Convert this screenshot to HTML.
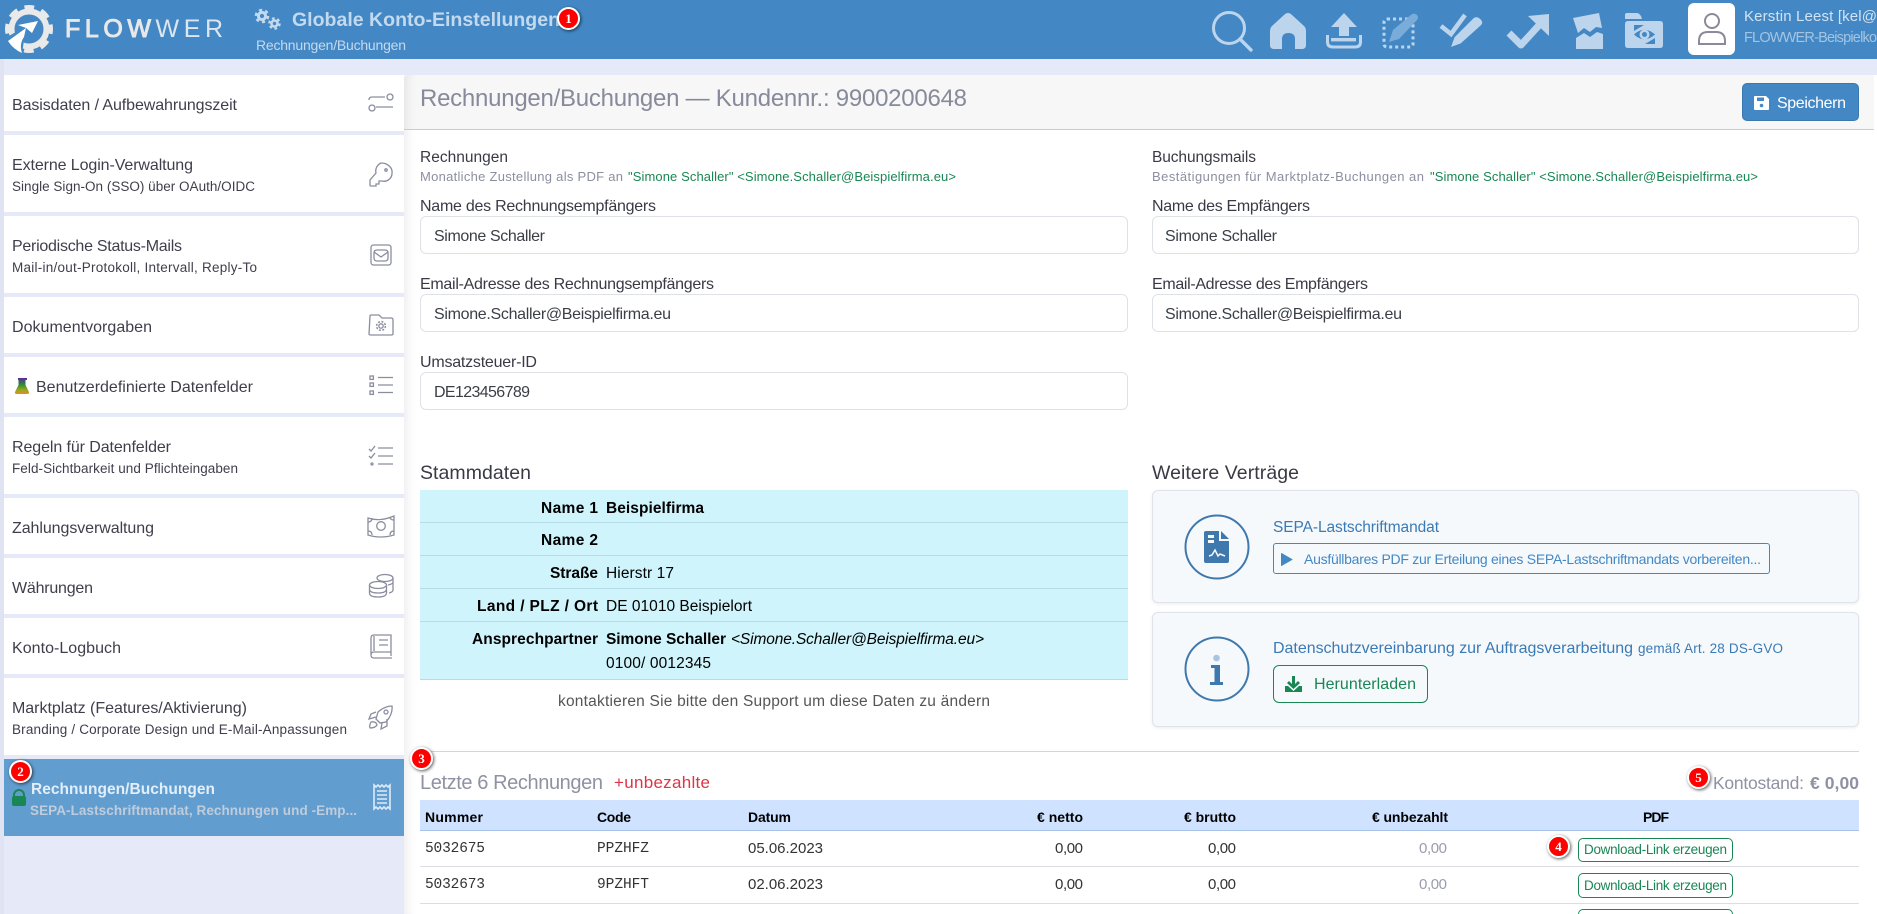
<!DOCTYPE html>
<html lang="de"><head><meta charset="utf-8"><title>FLOWWER – Globale Konto-Einstellungen</title>
<style>
html,body{margin:0;padding:0;width:1877px;height:914px;overflow:hidden;background:#e6eaf8;font-family:"Liberation Sans",Arial,sans-serif}
#p{position:relative;width:1877px;height:914px;overflow:hidden}
.b{position:absolute;box-sizing:border-box}
.t{position:absolute;white-space:nowrap;line-height:20px;height:20px;font-size:15px;color:#3a3a46;z-index:4}
.s{font-size:16px;color:#3f3f4c}
.u{font-size:13.5px;color:#3f3f4c}
.l{font-size:16px;color:#3a3a46}
.d{font-size:16px;color:#3a3f47}
.g{color:#198754}
.h{font-size:14px;font-weight:bold;color:#000}
.k{font-size:15.5px;color:#000}
.kb{font-size:15.5px;font-weight:bold;color:#000}
.m{font-family:"Liberation Mono",monospace;font-size:14.5px;color:#333}
.n{font-size:15px;color:#333}
.inp{background:#fff;border:1px solid #dee2e6;border-radius:6px;height:38px}
.card{background:#f6f9fc;border:1px solid #dfe3ea;border-radius:6px;box-shadow:0 1px 3px rgba(0,0,0,.08)}
.item{left:4px;width:400px;background:#fff}
.dl{left:1578px;width:155px;border:1px solid #198754;border-radius:5px;background:#fff}
.bd{position:absolute;width:23px;height:23px;box-sizing:border-box;border:2px solid #fff;border-radius:50%;background:#f00;color:#fff;font:bold 13px/19px "Liberation Serif",serif;text-align:center;box-shadow:1px 1px 3px rgba(0,0,0,.65);z-index:5}
.tr{left:420px;width:708px;height:1px;background:#b5dde8}
.rl{left:420px;width:1439px;height:1px;background:#dadce6}
svg.o{position:absolute;left:0;top:0;z-index:3;pointer-events:none}
</style></head><body><div id="p">

<div class="b" style="left:0;top:0;width:1877px;height:59px;background:#4388c5"></div>
<div class="b" style="left:0;top:59px;width:4px;height:855px;background:#dfe3f2"></div>

<div class="b item" style="top:75px;height:56px"></div>
<div class="b item" style="top:135px;height:77px"></div>
<div class="b item" style="top:216px;height:77px"></div>
<div class="b item" style="top:297px;height:56px"></div>
<div class="b item" style="top:357px;height:56px"></div>
<div class="b item" style="top:417px;height:77px"></div>
<div class="b item" style="top:498px;height:56px"></div>
<div class="b item" style="top:558px;height:56px"></div>
<div class="b item" style="top:618px;height:56px"></div>
<div class="b item" style="top:678px;height:77px"></div>
<div class="b item" style="top:759px;height:77px;background:#629dcf"></div>

<div class="b" style="left:404px;top:75px;width:1470px;height:839px;background:#fff;box-shadow:inset 12px 0 10px -9px rgba(40,40,80,.09)"></div>
<div class="b" style="left:1874px;top:75px;width:3px;height:839px;background:#fff"></div>
<div class="b" style="left:404px;top:75px;width:1470px;height:55px;background:#f7f7f7;border-bottom:1px solid #ccc;border-top-left-radius:4px;box-shadow:inset 12px 0 10px -9px rgba(40,40,80,.09)"></div>

<!-- header text -->
<div class="t" style="left:65px;top:19px;font-size:25px;color:#e8e8e8;--w:158"><span style="-webkit-text-stroke:1px #e8e8e8">FLOW</span><span style="color:#dbe6f0">WER</span></div>
<div class="t" style="left:292px;top:10px;font-size:19.5px;font-weight:bold;color:#c3d9ee;--w:268">Globale Konto-Einstellungen</div>
<div class="t" style="left:256px;top:35px;font-size:14px;color:#c3d9ee;--w:150">Rechnungen/Buchungen</div>
<div class="t" style="left:1744px;top:7px;font-size:15px;color:#d2e2f1;--w:133">Kerstin Leest [kel@</div>
<div class="t" style="left:1744px;top:28px;font-size:14.5px;color:#a3c4e2;--w:133">FLOWWER-Beispielko</div>

<div class="b" style="left:1688px;top:3px;width:47px;height:52px;background:#fff;border-radius:6px"></div>

<!-- sidebar text -->
<div class="t s" style="left:12px;top:96px;--w:225">Basisdaten / Aufbewahrungszeit</div>
<div class="t s" style="left:12px;top:156px;--w:181">Externe Login-Verwaltung</div>
<div class="t u" style="left:12px;top:177px;--w:243">Single Sign-On (SSO) über OAuth/OIDC</div>
<div class="t s" style="left:12px;top:237px;--w:170">Periodische Status-Mails</div>
<div class="t u" style="left:12px;top:258px;--w:245">Mail-in/out-Protokoll, Intervall, Reply-To</div>
<div class="t s" style="left:12px;top:318px;--w:140">Dokumentvorgaben</div>
<div class="t s" style="left:36px;top:378px;--w:217">Benutzerdefinierte Datenfelder</div>
<div class="t s" style="left:12px;top:438px;--w:159">Regeln für Datenfelder</div>
<div class="t u" style="left:12px;top:459px;--w:226">Feld-Sichtbarkeit und Pflichteingaben</div>
<div class="t s" style="left:12px;top:519px;--w:142">Zahlungsverwaltung</div>
<div class="t s" style="left:12px;top:579px;--w:81">Währungen</div>
<div class="t s" style="left:12px;top:639px;--w:109">Konto-Logbuch</div>
<div class="t s" style="left:12px;top:699px;--w:235">Marktplatz (Features/Aktivierung)</div>
<div class="t u" style="left:12px;top:720px;--w:335">Branding / Corporate Design und E-Mail-Anpassungen</div>
<div class="t" style="left:31px;top:780px;font-size:15.5px;font-weight:bold;color:#e2effb;--w:184">Rechnungen/Buchungen</div>
<div class="t" style="left:30px;top:801px;font-size:13.5px;font-weight:bold;color:#bfccdb;--w:327">SEPA-Lastschriftmandat, Rechnungen und -Emp...</div>

<!-- main head -->
<div class="t" style="left:420px;top:87px;font-size:24px;height:24px;line-height:24px;color:#868a9a;--w:547">Rechnungen/Buchungen — Kundennr.: 9900200648</div>
<div class="b" style="left:1742px;top:83px;width:117px;height:38px;background:#4388c5;border:1px solid #3a78b0;border-radius:5px"></div>
<div class="t" style="left:1777px;top:94px;font-size:16px;color:#fff;--w:69">Speichern</div>

<!-- forms left -->
<div class="t l" style="left:420px;top:148px;font-size:15.5px;--w:88">Rechnungen</div>
<div class="t" style="left:420px;top:167px;font-size:13px;color:#8b8fa0;--w:203">Monatliche Zustellung als PDF an</div>
<div class="t g" style="left:628px;top:167px;font-size:13px;--w:328">"Simone Schaller" &lt;Simone.Schaller@Beispielfirma.eu&gt;</div>
<div class="t l" style="left:420px;top:197px;--w:236">Name des Rechnungsempfängers</div>
<div class="b inp" style="left:420px;top:216px;width:708px"></div>
<div class="t d" style="left:434px;top:227px;--w:111">Simone Schaller</div>
<div class="t l" style="left:420px;top:275px;--w:294">Email-Adresse des Rechnungsempfängers</div>
<div class="b inp" style="left:420px;top:294px;width:708px"></div>
<div class="t d" style="left:434px;top:305px;--w:237">Simone.Schaller@Beispielfirma.eu</div>
<div class="t l" style="left:420px;top:353px;--w:117">Umsatzsteuer-ID</div>
<div class="b inp" style="left:420px;top:372px;width:708px"></div>
<div class="t d" style="left:434px;top:383px;--w:96">DE123456789</div>

<!-- forms right -->
<div class="t l" style="left:1152px;top:148px;font-size:15.5px;--w:104">Buchungsmails</div>
<div class="t" style="left:1152px;top:167px;font-size:13px;color:#8b8fa0;--w:272">Bestätigungen für Marktplatz-Buchungen an</div>
<div class="t g" style="left:1430px;top:167px;font-size:13px;--w:328">"Simone Schaller" &lt;Simone.Schaller@Beispielfirma.eu&gt;</div>
<div class="t l" style="left:1152px;top:197px;--w:158">Name des Empfängers</div>
<div class="b inp" style="left:1152px;top:216px;width:707px"></div>
<div class="t d" style="left:1165px;top:227px;--w:112">Simone Schaller</div>
<div class="t l" style="left:1152px;top:275px;--w:216">Email-Adresse des Empfängers</div>
<div class="b inp" style="left:1152px;top:294px;width:707px"></div>
<div class="t d" style="left:1165px;top:305px;--w:237">Simone.Schaller@Beispielfirma.eu</div>

<!-- Stammdaten -->
<div class="t" style="left:420px;top:463px;font-size:19.5px;color:#3a3a46;--w:111">Stammdaten</div>
<div class="b" style="left:420px;top:490px;width:708px;height:189px;background:#cff4fc"></div>
<div class="b tr" style="top:522px"></div><div class="b tr" style="top:555px"></div><div class="b tr" style="top:588px"></div><div class="b tr" style="top:621px"></div><div class="b tr" style="top:679px"></div>
<div class="t kb" style="left:541px;top:499px;--w:57">Name 1</div>
<div class="t kb" style="left:606px;top:499px;--w:98">Beispielfirma</div>
<div class="t kb" style="left:541px;top:531px;--w:57">Name 2</div>
<div class="t kb" style="left:550px;top:564px;--w:48">Straße</div>
<div class="t k" style="left:606px;top:564px;--w:68">Hierstr 17</div>
<div class="t kb" style="left:477px;top:597px;--w:121">Land / PLZ / Ort</div>
<div class="t k" style="left:606px;top:597px;--w:146">DE 01010 Beispielort</div>
<div class="t kb" style="left:472px;top:630px;--w:126">Ansprechpartner</div>
<div class="t kb" style="left:606px;top:630px;--w:120">Simone Schaller</div>
<div class="t k" style="left:731px;top:630px;font-style:italic;--w:253">&lt;Simone.Schaller@Beispielfirma.eu&gt;</div>
<div class="t k" style="left:606px;top:654px;--w:105">0100/ 0012345</div>
<div class="t" style="left:558px;top:692px;font-size:15.5px;color:#555;--w:432">kontaktieren Sie bitte den Support um diese Daten zu ändern</div>

<!-- Verträge -->
<div class="t" style="left:1152px;top:463px;font-size:19.5px;color:#3a3a46;--w:147">Weitere Verträge</div>
<div class="b card" style="left:1152px;top:490px;width:707px;height:113px"></div>
<div class="b card" style="left:1152px;top:612px;width:707px;height:115px"></div>
<div class="t" style="left:1273px;top:518px;font-size:15.5px;color:#3a7ab5;--w:166">SEPA-Lastschriftmandat</div>
<div class="b" style="left:1273px;top:543px;width:497px;height:31px;border:1px solid #4388c5;border-radius:3px"></div>
<div class="t" style="left:1304px;top:549px;font-size:14px;color:#4388c5;--w:457">Ausfüllbares PDF zur Erteilung eines SEPA-Lastschriftmandats vorbereiten...</div>
<div class="t" style="left:1273px;top:639px;font-size:16px;color:#3a7ab5;--w:360">Datenschutzvereinbarung zur Auftragsverarbeitung</div>
<div class="t" style="left:1638px;top:639px;font-size:13.5px;color:#3a7ab5;--w:145">gemäß Art. 28 DS-GVO</div>
<div class="b" style="left:1273px;top:665px;width:155px;height:38px;border:1px solid #198754;border-radius:6px"></div>
<div class="t g" style="left:1314px;top:675px;font-size:16px;--w:102">Herunterladen</div>

<!-- invoices -->
<div class="b" style="left:420px;top:751px;width:1439px;height:1px;background:#d4d5dc"></div>
<div class="t" style="left:420px;top:773px;font-size:20px;color:#8e92a2;--w:183">Letzte 6 Rechnungen</div>
<div class="t" style="left:614px;top:773px;font-size:17px;color:#dc3545;--w:96">+unbezahlte</div>
<div class="t" style="left:1713px;top:773px;font-size:17.5px;color:#8e92a2;--w:91">Kontostand:</div>
<div class="t" style="left:1810px;top:773px;font-size:17.5px;font-weight:bold;color:#8e92a2;--w:49">€ 0,00</div>

<div class="b" style="left:420px;top:800px;width:1439px;height:31px;background:#cfe2ff;border-bottom:1px solid #a9c4ea"></div>
<div class="t h" style="left:425px;top:807px;--w:58">Nummer</div>
<div class="t h" style="left:597px;top:807px;--w:34">Code</div>
<div class="t h" style="left:748px;top:807px;--w:43">Datum</div>
<div class="t h" style="left:1037px;top:807px;--w:46">€ netto</div>
<div class="t h" style="left:1184px;top:807px;--w:52">€ brutto</div>
<div class="t h" style="left:1372px;top:807px;--w:76">€ unbezahlt</div>
<div class="t h" style="left:1643px;top:807px;--w:26">PDF</div>

<div class="b rl" style="top:866px"></div><div class="b rl" style="top:903px"></div>
<div class="t m" style="left:425px;top:839px;--w:60">5032675</div>
<div class="t m" style="left:597px;top:839px;--w:52">PPZHFZ</div>
<div class="t n" style="left:748px;top:839px;--w:75">05.06.2023</div>
<div class="t n" style="left:1055px;top:839px;--w:28">0,00</div>
<div class="t n" style="left:1208px;top:839px;--w:28">0,00</div>
<div class="t n" style="left:1419px;top:839px;color:#9a9dac;--w:28">0,00</div>
<div class="b dl" style="top:838px;height:24px"></div>
<div class="t g" style="left:1584px;top:840px;font-size:13.5px;--w:143">Download-Link erzeugen</div>

<div class="t m" style="left:425px;top:875px;--w:60">5032673</div>
<div class="t m" style="left:597px;top:875px;--w:52">9PZHFT</div>
<div class="t n" style="left:748px;top:875px;--w:75">02.06.2023</div>
<div class="t n" style="left:1055px;top:875px;--w:28">0,00</div>
<div class="t n" style="left:1208px;top:875px;--w:28">0,00</div>
<div class="t n" style="left:1419px;top:875px;color:#9a9dac;--w:28">0,00</div>
<div class="b dl" style="top:873px;height:25px"></div>
<div class="t g" style="left:1584px;top:876px;font-size:13.5px;--w:143">Download-Link erzeugen</div>
<div class="b dl" style="top:909px;height:5px;border-bottom:0;border-bottom-left-radius:0;border-bottom-right-radius:0"></div>

<!-- badges -->
<div class="bd" style="left:557px;top:7px">1</div>
<div class="bd" style="left:9px;top:760px">2</div>
<div class="bd" style="left:410px;top:747px">3</div>
<div class="bd" style="left:1547px;top:835px">4</div>
<div class="bd" style="left:1687px;top:766px">5</div>

<!-- all icons in page coordinates -->
<svg class="o" width="1877" height="914" viewBox="0 0 1877 914" xmlns="http://www.w3.org/2000/svg">
<defs><linearGradient id="fl" x1="0" y1="0" x2="0" y2="1"><stop offset="0" stop-color="#5a2a9a"/><stop offset=".4" stop-color="#2c8a3a"/><stop offset=".75" stop-color="#9aa820"/><stop offset="1" stop-color="#e88a20"/></linearGradient></defs>

<!-- logo -->
<g fill="none" stroke="#e9e9e9">
<circle cx="29" cy="29" r="17.5" stroke-width="6"/>
<circle cx="29" cy="29" r="21.5" stroke-width="5" stroke-dasharray="9.5 7.4" stroke-dashoffset="4.7"/>
</g>
<path d="M9 36 L26 26 L22 54 L4 44Z" fill="#4388c5"/>
<path d="M18 25 L38 21 L32 33 L26 28 Z" fill="#fff"/>
<path d="M26 28 L8 41 Q13 49 22 53 Q19 44 24 37 Z" fill="#fff"/>

<!-- title gears -->
<g fill="none" stroke="#c3d9ee">
<circle cx="262" cy="16" r="3.6" stroke-width="3"/><circle cx="262" cy="16" r="5.8" stroke-width="3" stroke-dasharray="3 3.07"/>
<circle cx="274.5" cy="23.5" r="3" stroke-width="2.6"/><circle cx="274.5" cy="23.5" r="5" stroke-width="2.6" stroke-dasharray="2.6 2.64"/>
</g>

<!-- top icons -->
<g fill="#bcd5ec">
<circle cx="1229" cy="28" r="15.5" fill="none" stroke="#bcd5ec" stroke-width="3"/>
<path d="M1240 39 L1251 50" fill="none" stroke="#bcd5ec" stroke-width="3.4" stroke-linecap="round"/>
<path d="M1288 13 Q1290 13 1292 15 L1304 26 Q1306 28 1306 31 V45 Q1306 49 1302 49 H1295 V39 Q1295 33 1288.5 33 Q1282 33 1282 39 V49 H1274 Q1270 49 1270 45 V31 Q1270 28 1272 26 L1284 15 Q1286 13 1288 13Z"/>
<path d="M1344 13 L1357 27 H1349 V36 H1339 V27 H1331Z"/>
<path d="M1327.5 35 V42 Q1327.5 47 1333 47 H1355 Q1360.5 47 1360.5 42 V35" fill="none" stroke="#bcd5ec" stroke-width="3"/>
<rect x="1331" y="38" width="25" height="3.4"/>
<rect x="1384" y="19" width="29" height="28" rx="3" fill="none" stroke="#bcd5ec" stroke-width="3" stroke-dasharray="3 3"/>
<path d="M1389 42 L1393 30 L1412 14 Q1415 13 1417 15 Q1419 17 1417 20 L1399 39Z" fill="#7aacd9"/>
<path d="M1441 26 L1451 34 L1465 15" fill="none" stroke="#bcd5ec" stroke-width="4.5"/>
<path d="M1450 48 L1454 37 L1473 18 Q1476 15 1480 18 Q1485 22 1481 26 L1461 44Z" stroke="#4388c5" stroke-width="1.2"/>
<path d="M1509 33 L1521 45 L1542 22" fill="none" stroke="#bcd5ec" stroke-width="7" stroke-linejoin="round"/>
<path d="M1528 16 L1549 14 L1549 36Z"/>
<path d="M1573 18 L1599 13 L1602 28 L1596 27 L1590 32 L1584 28 L1578 33Z"/>
<path d="M1576 38 L1584 33 L1590 37 L1597 32 L1603 34 V49 H1576Z"/>
<path d="M1625 15 Q1625 13 1627 13 H1637 Q1639 13 1641 16 L1642 19 H1625Z"/>
<path d="M1628 21 H1660 Q1663 21 1663 24 V45 Q1663 48 1660 48 H1628 Q1625 48 1625 45 V24 Q1625 21 1628 21Z"/>
</g>
<path d="M1634 34.5 Q1644 25 1655 34.5 Q1644 44 1634 34.5Z" fill="#4388c5"/><circle cx="1644.5" cy="34.5" r="5" fill="#bcd5ec"/><circle cx="1644.5" cy="34.5" r="2.5" fill="#4388c5"/>
<path d="M1634 25 L1644 25 L1634 31Z M1655 44 L1645 44 L1655 38Z" fill="#4388c5"/>

<!-- user -->
<g fill="none" stroke="#8a8a9a" stroke-width="2"><circle cx="1712" cy="21" r="7"/><path d="M1699 44 V41 Q1699 32 1708 32 H1716 Q1725 32 1725 41 V44Z"/></g>

<!-- sidebar icons -->
<g fill="none" stroke="#8a8d9e" stroke-width="1.3">
<path d="M369 100 Q369 97 372 97 H385"/><circle cx="390" cy="97" r="3"/><circle cx="372" cy="108" r="3"/><path d="M376 107 H393 "/>
<path d="M381 163 a11 9 0 0 1 11 10 a8 8 0 0 1-10 8 l-3 0 v3 h-3 v2 h-5 q-1 0-1-1 v-5 l6-7 a10 9 0 0 1 5-10z"/><circle cx="386" cy="170" r="1.2"/>
<rect x="371" y="245" width="20" height="20" rx="2.5"/><path d="M374 253 Q374 250 377 250 H385 Q388 250 388 253 V258 Q388 261 385 261 H377 Q374 261 374 258Z"/><path d="M374 252 L381 257 L388 252"/>
<path d="M370 316 Q370 315 371 315 H379 L382 318 H391 Q393 318 393 320 V334 Q393 335 391 335 H371 Q369 335 369 334Z"/><circle cx="381" cy="326" r="2.2"/><circle cx="381" cy="326" r="4.4" stroke-width="1.5" stroke-dasharray="2 1.5"/>
<rect x="370" y="376" width="3.4" height="3.4"/><rect x="370" y="383" width="3.4" height="3.4"/><rect x="370" y="391" width="3.4" height="3.4"/><path d="M378 377.5 H393 M378 385 H393 M378 392.5 H393"/>
<path d="M369 449 L371 451 L375 446 M369 456 L371 458 L375 453 M378 448 H393 M378 456 H393 M378 464 H393"/><circle cx="372" cy="464" r="1"/>
<path d="M368 518 Q380 522 394 516 V535 Q380 539 368 535Z"/><circle cx="381" cy="526" r="4.3"/><path d="M368 522 Q372 522 372 518 M394 520 Q390 520 390 517 M368 531 Q372 531 372 535 M394 531 Q390 531 390 535"/>
<ellipse cx="385" cy="578" rx="8" ry="3.5"/><path d="M393 578 V590 Q393 592 389 593 M388 585 Q393 584 393 582"/><ellipse cx="378" cy="585" rx="8.5" ry="3.5"/><path d="M369.5 585 V593 Q369.5 597 378 597 Q386.5 597 386.5 593 V585 M369.5 589 Q369.5 593 378 593 Q386.5 593 386.5 589"/>
<path d="M374 635 H391 V652 H374 Q371 652 371 655 V638 Q371 635 374 635Z M371 655 Q371 658 374 658 H392 M391 652 V656 M374 636 V651 M379 640 H388 M379 645 H388"/>
<path d="M392 706 Q393 714 386 722 L380 723 L376 719 L378 712 Q385 706 392 706Z"/><circle cx="386" cy="712" r="2"/><path d="M376 712 L371 714 L369 719 L376 717 M382 723 L381 729 L387 726 L387 719"/><path d="M371 722 Q369 726 370 728 Q375 728 377 725 Q376 721 371 722Z"/>
</g>
<path d="M18 378 H27 V380 H25.5 V385 L29 392 Q29.5 394 27 394 H17 Q14.5 394 15 392 L18.5 385 V380 H18Z" fill="url(#fl)"/>
<path d="M14 800 V796 A5 5 0 0 1 24 796 V800" transform="translate(0,-1)" fill="none" stroke="#198754" stroke-width="2"/>
<rect x="12" y="796" width="14" height="10" rx="2" fill="#198754"/>
<path d="M374 785 L376 787 L378 785 L380 787 L382 785 L384 787 L386 785 L388 787 L390 785 V809 L388 807 L386 809 L384 807 L382 809 L380 807 L378 809 L376 807 L374 809Z" fill="none" stroke="#dcebf9" stroke-width="1.6"/>
<path d="M377 791 H387 M377 795 H387 M377 799 H387 M377 803 H387" stroke="#dcebf9" stroke-width="1.6"/>

<!-- save icon -->
<path d="M1755 96 H1766 L1769 99 V109 Q1769 110 1768 110 H1755 Q1754 110 1754 109 V97 Q1754 96 1755 96Z" fill="#fff"/>
<rect x="1757" y="97.5" width="7" height="3.5" fill="#4388c5"/><circle cx="1761.5" cy="105.5" r="1.8" fill="#4388c5"/>

<!-- card icons -->
<circle cx="1217" cy="547" r="31.5" fill="none" stroke="#3f78ad" stroke-width="2"/>
<path d="M1206 531 H1219 V541 H1229 V561 Q1229 563 1227 563 H1206 Q1204 563 1204 561 V533 Q1204 531 1206 531Z" fill="#3f78ad"/>
<path d="M1221 531 L1229 539 H1221Z" fill="#3f78ad"/>
<path d="M1208 535 H1214 V538 H1208Z M1208 540 H1214 V543 H1208Z" fill="#f6f9fc"/>
<path d="M1209 556 L1212 555 L1215 550 L1218 556 L1220 554 L1225 556" fill="none" stroke="#f6f9fc" stroke-width="1.5"/>
<path d="M1281.5 553.5 L1292 559.5 L1281.5 565.5Z" fill="#4388c5" stroke="#4388c5" stroke-width="1" stroke-linejoin="round"/>
<circle cx="1217" cy="669" r="31.5" fill="none" stroke="#3f78ad" stroke-width="2"/>
<circle cx="1216.5" cy="658" r="3.3" fill="#a9c4de"/>
<path d="M1211 665 H1220 V682 H1223 V685 H1210 V682 H1214.5 V668 H1211Z" fill="#3f78ad"/>
<path d="M1292 676 H1295 V684 L1298 681 L1300 683 L1293.5 689 L1287 683 L1289 681 L1292 684Z" fill="#198754"/>
<path d="M1285 686 H1288 L1293.5 691 L1299 686 H1302 V692 H1285Z" fill="#198754"/>
</svg>
</div>
<script>
// fine-tune letter spacing so text widths match the layout
document.querySelectorAll('.t').forEach(function(e){
  var w=parseFloat(e.style.getPropertyValue('--w'));if(!w)return;
  var n=e.textContent.length;if(n<2)return;
  var m=e.getBoundingClientRect().width;
  e.style.letterSpacing=((w-m)/(n-1)).toFixed(3)+'px';
});
</script>
</body></html>
